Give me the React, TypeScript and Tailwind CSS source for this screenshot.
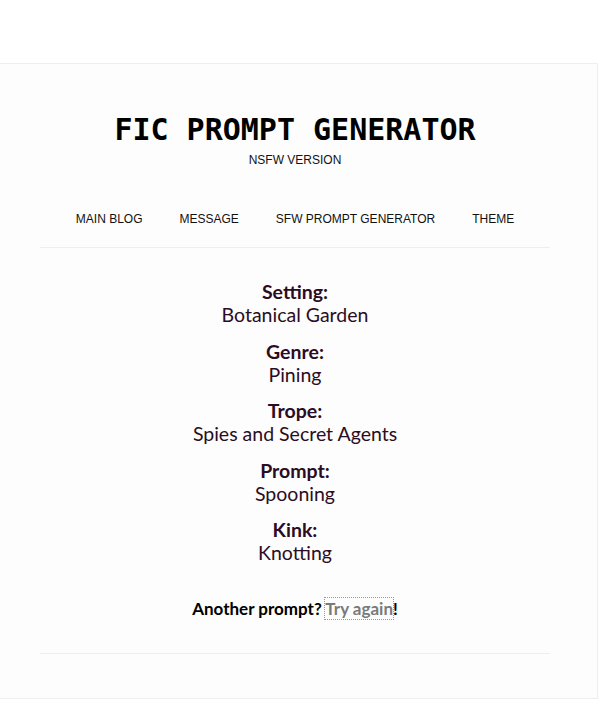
const fields = [
  { label: 'Setting:', value: 'Botanical Garden' },
  { label: 'Genre:', value: 'Pining' },
  { label: 'Trope:', value: 'Spies and Secret Agents' },
  { label: 'Prompt:', value: 'Spooning' },
  { label: 'Kink:', value: 'Knotting' },
];

const links = ['MAIN BLOG', 'MESSAGE', 'SFW PROMPT GENERATOR', 'THEME'];

export default function App() {
  return (
    <div className="min-h-screen bg-white pt-[63px]">
      <div className="w-[598px] h-[636px] border border-l-0 border-[#eeeeee] bg-[#fdfdfd] pl-[40px]">
        <div className="w-[510px]">
          {/* header */}
          <div className="pt-[48px] text-center">
            <h1 className="font-['DejaVu_Sans_Mono','Liberation_Mono',monospace] text-[30px] leading-[36px] font-bold text-black">
              FIC PROMPT GENERATOR
            </h1>
            <p className="mt-[5px] font-['Liberation_Sans',Arial,sans-serif] text-[12px] leading-[14px] text-[#111]">
              NSFW VERSION
            </p>
          </div>

          <nav className="mt-[44px] pb-[20px] border-b border-[#eeeeee] flex justify-center gap-[37px] font-['Liberation_Sans',Arial,sans-serif] text-[12px] leading-[16px] text-[#111]">
            {links.map((l) => (
              <a key={l} className="cursor-pointer">{l}</a>
            ))}
          </nav>

          {/* generated prompt */}
          <div className="pt-[32px] pb-[33px] border-b border-[#eeeeee] text-center font-['Lato','Open_Sans',sans-serif] text-[19.5px] leading-[23px] text-[#2b0c22]">
            <div className="flex flex-col gap-[13.5px]">
              {fields.map((f) => (
                <div key={f.label}>
                  <div className="font-bold">{f.label}</div>
                  <div>{f.value}</div>
                </div>
              ))}
            </div>
            <p className="mt-[33px] font-bold text-[17px] leading-[23px] text-black">
              Another prompt?{' '}
              <a className="text-[#7a7a7a] outline outline-1 outline-dotted outline-[#999] cursor-pointer">Try again</a>!
            </p>
          </div>
        </div>
      </div>
    </div>
  );
}
